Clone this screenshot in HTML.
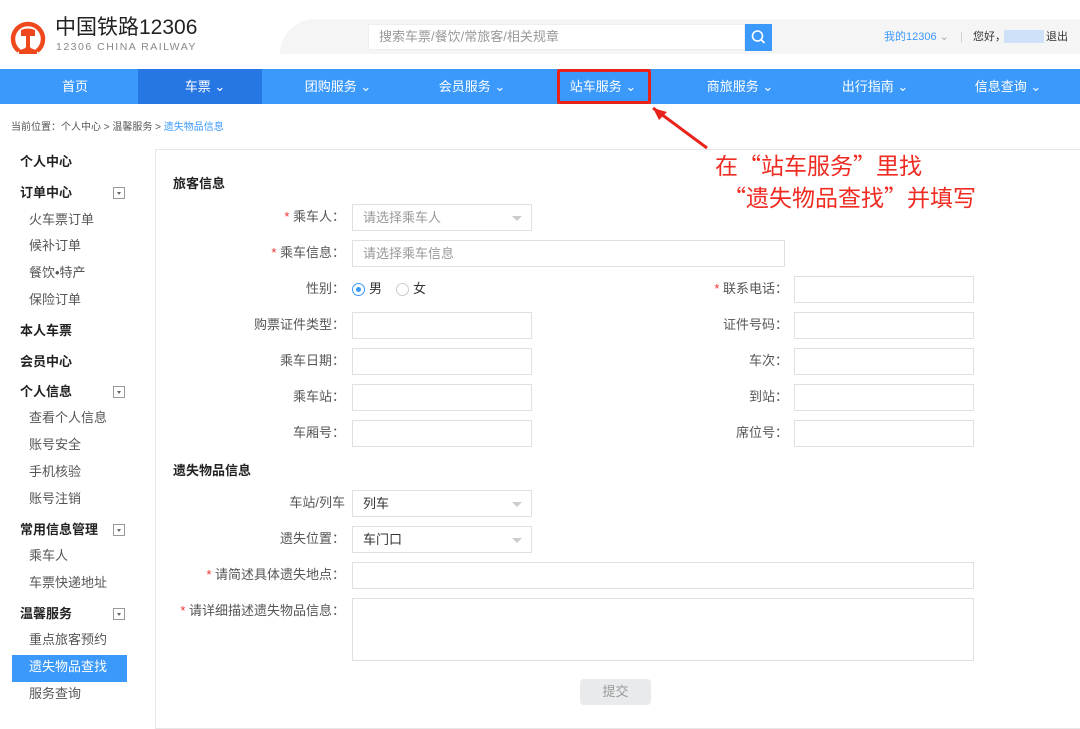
<!DOCTYPE html>
<html><head><meta charset="utf-8"><style>
*{margin:0;padding:0;box-sizing:border-box}
body{width:1080px;height:713px;overflow:hidden;background:#fff;font-family:"Liberation Sans","Noto Sans CJK SC",sans-serif;color:#333;position:relative;font-size:13px}
.a{position:absolute;white-space:nowrap}
.nav{position:absolute;left:0;top:69px;width:1080px;height:35px;background:#3b99fc}
.nav span{position:absolute;top:0;line-height:35px;color:#fff;font-size:13px;transform:translateX(-50%)}
.sb{position:absolute;left:20px;font-size:13px;line-height:18px}
.sb.b{font-weight:bold;color:#222}
.sb.s{left:29px;color:#555}
.tg{position:absolute;left:113px;width:12px;height:12px;border:1px solid #999;}
.tg:after{content:"";position:absolute;left:3px;top:4px;border:2.5px solid transparent;border-top:3px solid #666}
.lb{position:absolute;right:735px;font-size:13px;color:#555;line-height:18px;text-align:right}
.lb2{position:absolute;right:292px;font-size:13px;color:#555;line-height:18px}
.r{color:#e33}
.in{position:absolute;height:27px;border:1px solid #e0e0e0;background:#fff;font-size:13px;color:#999;line-height:25px;padding-left:10px}
.dd:after{content:"";position:absolute;right:9px;top:11px;border:5px solid transparent;border-top:5px solid #ccc}
.q{font-family:"Noto Sans CJK SC",sans-serif}
</style></head><body>
<svg class="a" style="left:10px;top:16px" width="36" height="40" viewBox="0 0 36 40">
<path d="M9 35 A15 15 0 1 1 27 35" fill="none" stroke="#f0481d" stroke-width="4.5"/>
<path d="M11 14 Q18 11 25 14 L25 20 L20 20 L20 31 Q21 33 27 34 L27 38 L9 38 L9 34 Q15 33 16 31 L16 20 L11 20 Z" fill="#f0481d"/>
</svg>
<div class="a" style="left:55px;top:15px;font-size:21px;color:#222;line-height:26px">中国铁路12306</div>
<div class="a" style="left:56px;top:41px;font-size:10.5px;color:#888;letter-spacing:1.5px;line-height:12px">12306 CHINA RAILWAY</div>
<div class="a" style="left:280px;top:19px;width:800px;height:35px;background:#f5f5f5;border-radius:60px 0 0 0"></div>
<div class="a" style="left:368px;top:24px;width:377px;height:26px;background:#fff;border:1px solid #eee;color:#999;font-size:13px;line-height:24px;padding-left:10px">搜索车票/餐饮/常旅客/相关规章</div>
<div class="a" style="left:745px;top:24px;width:27px;height:27px;background:#3b99fc"><svg width="27" height="27"><circle cx="12.5" cy="12" r="5" fill="none" stroke="#fff" stroke-width="1.6"/><path d="M16 15.5 L19.5 19" stroke="#fff" stroke-width="1.8"/></svg></div>
<div class="a" style="left:884px;top:30px;font-size:11px;color:#3b99fc;line-height:14px">我的12306 <span style="color:#aaa">⌄</span></div>
<div class="a" style="left:960px;top:30px;font-size:11px;color:#ccc;line-height:14px">|</div>
<div class="a" style="left:973px;top:30px;font-size:11px;color:#333;line-height:14px">您好，</div>
<div class="a" style="left:1004px;top:30px;width:40px;height:13px;background:#cfe1f9"></div>
<div class="a" style="left:1046px;top:30px;font-size:11px;color:#333;line-height:14px">退出</div>
<div class="nav">
<div class="a" style="left:138px;top:0;width:124px;height:35px;background:#2676e3"></div>
<span style="left:75px">首页</span><span style="left:205px">车票 ⌄</span><span style="left:338px">团购服务 ⌄</span><span style="left:472px">会员服务 ⌄</span><span style="left:603px">站车服务 ⌄</span><span style="left:740px">商旅服务 ⌄</span><span style="left:875px">出行指南 ⌄</span><span style="left:1008px">信息查询 ⌄</span>
</div>
<div class="a" style="left:557px;top:69px;width:94px;height:35px;border:3px solid #e8231c;border-radius:2px"></div>
<svg class="a" style="left:645px;top:104px" width="70" height="50"><path d="M8 4 L62 44" stroke="#e8231c" stroke-width="3"/><path d="M8 4 L22 8 L14 16 Z" fill="#e8231c"/></svg>
<div class="a" style="left:715px;top:150px;font-size:23px;color:#ef2b22;line-height:28px">在<span class="q">“</span>站车服务<span class="q">”</span>里找</div>
<div class="a" style="left:723px;top:182px;font-size:23px;color:#ef2b22;line-height:28px"><span class="q">“</span>遗失物品查找<span class="q">”</span>并填写</div>
<div class="a" style="left:11px;top:121px;font-size:10px;color:#555;line-height:14px">当前位置：个人中心 &gt; 温馨服务 &gt; <span style="color:#3b99fc">遗失物品信息</span></div>
<div class="a" style="left:155px;top:149px;width:930px;height:580px;border:1px solid #e6e6e6"></div>
<div class="sb b" style="top:153px">个人中心</div>
<div class="sb b" style="top:184px">订单中心</div><div class="tg" style="top:187px"></div>
<div class="sb s" style="top:211px">火车票订单</div>
<div class="sb s" style="top:237px">候补订单</div>
<div class="sb s" style="top:264px">餐饮•特产</div>
<div class="sb s" style="top:291px">保险订单</div>
<div class="sb b" style="top:322px">本人车票</div>
<div class="sb b" style="top:353px">会员中心</div>
<div class="sb b" style="top:383px">个人信息</div><div class="tg" style="top:386px"></div>
<div class="sb s" style="top:409px">查看个人信息</div>
<div class="sb s" style="top:436px">账号安全</div>
<div class="sb s" style="top:463px">手机核验</div>
<div class="sb s" style="top:490px">账号注销</div>
<div class="sb b" style="top:521px">常用信息管理</div><div class="tg" style="top:524px"></div>
<div class="sb s" style="top:547px">乘车人</div>
<div class="sb s" style="top:574px">车票快递地址</div>
<div class="sb b" style="top:605px">温馨服务</div><div class="tg" style="top:608px"></div>
<div class="sb s" style="top:631px">重点旅客预约</div>
<div class="a" style="left:12px;top:655px;width:115px;height:27px;background:#3b99fc"></div>
<div class="sb s" style="top:658px;color:#fff">遗失物品查找</div>
<div class="sb s" style="top:685px">服务查询</div>

<div class="a" style="left:173px;top:173px;font-size:13px;font-weight:bold;color:#222">旅客信息</div>
<div class="lb" style="top:208px"><span class="r">* </span>乘车人：</div><div class="in dd" style="left:352px;top:204px;width:180px">请选择乘车人</div>
<div class="lb" style="top:244px"><span class="r">* </span>乘车信息：</div><div class="in" style="left:352px;top:240px;width:433px">请选择乘车信息</div>
<div class="lb" style="top:280px">性别：</div>
<div class="a" style="left:352px;top:283px;width:13px;height:13px;border:1px solid #3b99fc;border-radius:50%"><div style="margin:3px;width:5px;height:5px;border-radius:50%;background:#3b99fc"></div></div>
<div class="a" style="left:369px;top:280px;line-height:18px">男</div>
<div class="a" style="left:396px;top:283px;width:13px;height:13px;border:1px solid #ccc;border-radius:50%"></div>
<div class="a" style="left:413px;top:280px;line-height:18px">女</div>
<div class="lb2" style="top:280px"><span class="r">* </span>联系电话：</div><div class="in" style="left:794px;top:276px;width:180px"></div>
<div class="lb" style="top:316px">购票证件类型：</div><div class="in" style="left:352px;top:312px;width:180px"></div>
<div class="lb2" style="top:316px">证件号码：</div><div class="in" style="left:794px;top:312px;width:180px"></div>
<div class="lb" style="top:352px">乘车日期：</div><div class="in" style="left:352px;top:348px;width:180px"></div>
<div class="lb2" style="top:352px">车次：</div><div class="in" style="left:794px;top:348px;width:180px"></div>
<div class="lb" style="top:388px">乘车站：</div><div class="in" style="left:352px;top:384px;width:180px"></div>
<div class="lb2" style="top:388px">到站：</div><div class="in" style="left:794px;top:384px;width:180px"></div>
<div class="lb" style="top:424px">车厢号：</div><div class="in" style="left:352px;top:420px;width:180px"></div>
<div class="lb2" style="top:424px">席位号：</div><div class="in" style="left:794px;top:420px;width:180px"></div>
<div class="a" style="left:173px;top:460px;font-size:13px;font-weight:bold;color:#222">遗失物品信息</div>
<div class="lb" style="top:494px">车站/列车</div><div class="in dd" style="left:352px;top:490px;width:180px;color:#333">列车</div>
<div class="lb" style="top:530px">遗失位置：</div><div class="in dd" style="left:352px;top:526px;width:180px;color:#333">车门口</div>
<div class="lb" style="top:566px"><span class="r">* </span>请简述具体遗失地点：</div><div class="in" style="left:352px;top:562px;width:622px"></div>
<div class="lb" style="top:602px"><span class="r">* </span>请详细描述遗失物品信息：</div><div class="in" style="left:352px;top:598px;width:622px;height:63px"></div>
<div class="a" style="left:580px;top:679px;width:71px;height:26px;background:#e8eaec;border-radius:4px;color:#999;text-align:center;line-height:26px">提交</div>
</body></html>
